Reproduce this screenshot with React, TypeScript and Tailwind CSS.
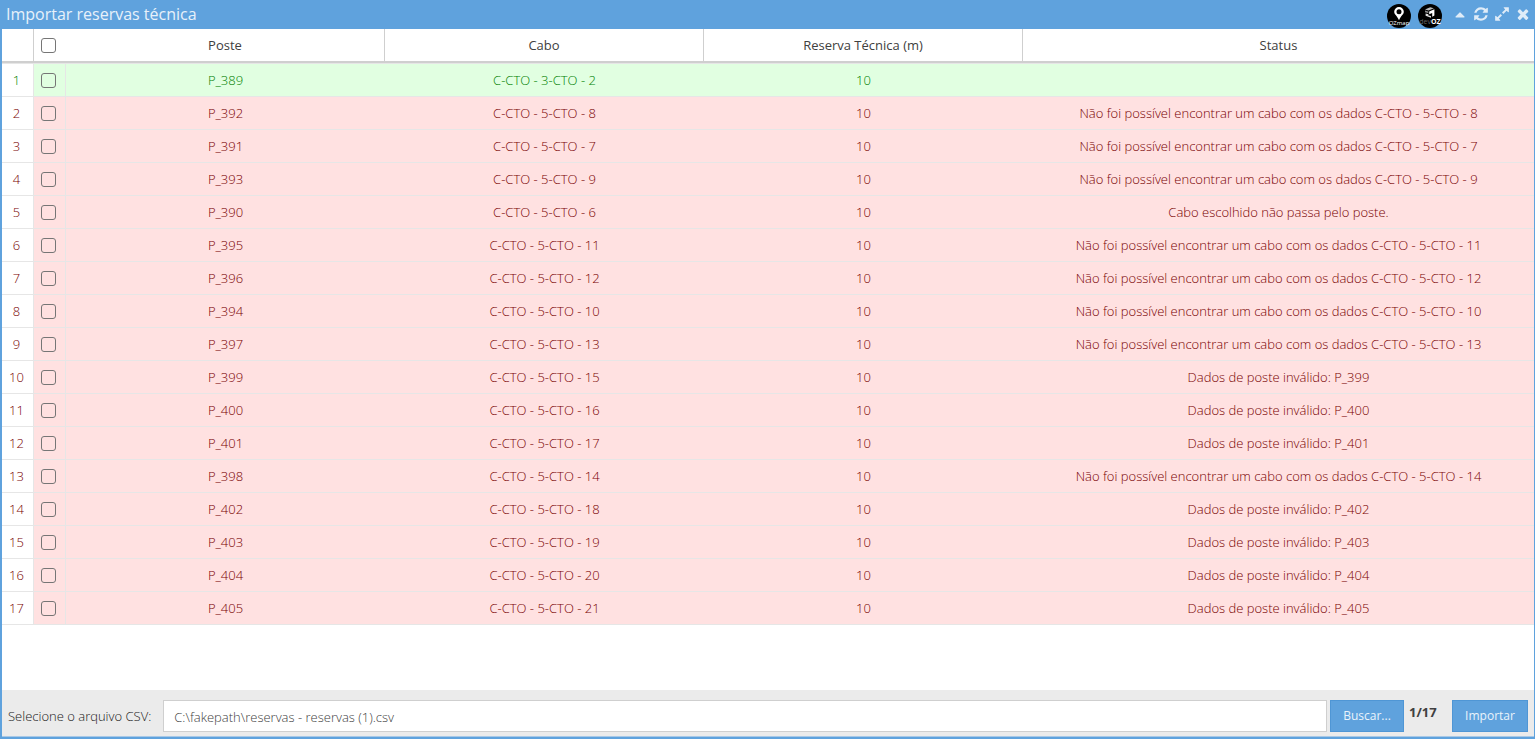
import { useState } from 'react';

interface Reserva {
  poste: string;
  cabo: string;
  metros: number;
  status: string;
}

const semCabo = (cabo: string) => `Não foi possível encontrar um cabo com os dados ${cabo}`;
const posteInvalido = (poste: string) => `Dados de poste inválido: ${poste}`;

const reservas: Reserva[] = [
  { poste: 'P_389', cabo: 'C-CTO - 3-CTO - 2', metros: 10, status: '' },
  { poste: 'P_392', cabo: 'C-CTO - 5-CTO - 8', metros: 10, status: semCabo('C-CTO - 5-CTO - 8') },
  { poste: 'P_391', cabo: 'C-CTO - 5-CTO - 7', metros: 10, status: semCabo('C-CTO - 5-CTO - 7') },
  { poste: 'P_393', cabo: 'C-CTO - 5-CTO - 9', metros: 10, status: semCabo('C-CTO - 5-CTO - 9') },
  { poste: 'P_390', cabo: 'C-CTO - 5-CTO - 6', metros: 10, status: 'Cabo escolhido não passa pelo poste.' },
  { poste: 'P_395', cabo: 'C-CTO - 5-CTO - 11', metros: 10, status: semCabo('C-CTO - 5-CTO - 11') },
  { poste: 'P_396', cabo: 'C-CTO - 5-CTO - 12', metros: 10, status: semCabo('C-CTO - 5-CTO - 12') },
  { poste: 'P_394', cabo: 'C-CTO - 5-CTO - 10', metros: 10, status: semCabo('C-CTO - 5-CTO - 10') },
  { poste: 'P_397', cabo: 'C-CTO - 5-CTO - 13', metros: 10, status: semCabo('C-CTO - 5-CTO - 13') },
  { poste: 'P_399', cabo: 'C-CTO - 5-CTO - 15', metros: 10, status: posteInvalido('P_399') },
  { poste: 'P_400', cabo: 'C-CTO - 5-CTO - 16', metros: 10, status: posteInvalido('P_400') },
  { poste: 'P_401', cabo: 'C-CTO - 5-CTO - 17', metros: 10, status: posteInvalido('P_401') },
  { poste: 'P_398', cabo: 'C-CTO - 5-CTO - 14', metros: 10, status: semCabo('C-CTO - 5-CTO - 14') },
  { poste: 'P_402', cabo: 'C-CTO - 5-CTO - 18', metros: 10, status: posteInvalido('P_402') },
  { poste: 'P_403', cabo: 'C-CTO - 5-CTO - 19', metros: 10, status: posteInvalido('P_403') },
  { poste: 'P_404', cabo: 'C-CTO - 5-CTO - 20', metros: 10, status: posteInvalido('P_404') },
  { poste: 'P_405', cabo: 'C-CTO - 5-CTO - 21', metros: 10, status: posteInvalido('P_405') },
];

const windowTools = [
  {
    label: 'Recolher',
    path: 'M1408 1216q0 26-19 45t-45 19h-896q-26 0-45-19t-19-45 19-45l448-448q19-19 45-19t45 19l448 448q19 19 19 45z',
  },
  {
    label: 'Atualizar',
    path: 'M1639 1056q0 5-1 7-64 268-268 434.5t-478 166.5q-146 0-282.5-55t-243.5-157l-129 129q-19 19-45 19t-45-19-19-45v-448q0-26 19-45t45-19h448q26 0 45 19t19 45-19 45l-137 137q71 66 161 102t187 36q134 0 250-65t186-179q11-17 53-117 8-23 30-23h192q13 0 22.5 9.5t9.5 22.5zm25-800v448q0 26-19 45t-45 19h-448q-26 0-45-19t-19-45 19-45l138-138q-148-137-349-137-134 0-250 65t-186 179q-11 17-53 117-8 23-30 23h-199q-13 0-22.5-9.5t-9.5-22.5v-7q65-268 270-434.5t480-166.5q146 0 284 55.5t245 156.5l130-129q19-19 45-19t45 19 19 45z',
  },
  {
    label: 'Maximizar',
    path: 'M883 1056q0 13-10 23l-332 332 144 144q19 19 19 45t-19 45-45 19h-448q-26 0-45-19t-19-45v-448q0-26 19-45t45-19 45 19l144 144 332-332q10-10 23-10t23 10l114 114q10 10 10 23zm781-864v448q0 26-19 45t-45 19-45-19l-144-144-332 332q-10 10-23 10t-23-10l-114-114q-10-10-10-23t10-23l332-332-144-144q-19-19-19-45t19-45 45-19h448q26 0 45 19t19 45z',
  },
  {
    label: 'Fechar',
    path: 'M1490 1322q0 40-28 68l-136 136q-28 28-68 28t-68-28l-294-294-294 294q-28 28-68 28t-68-28l-136-136q-28-28-28-68t28-68l294-294-294-294q-28-28-28-68t28-68l136-136q28-28 68-28t68 28l294 294 294-294q28-28 68-28t68 28l136 136q28 28 28 68t-28 68l-294 294 294 294q28 28 28 68z',
  },
];

const checkboxClass =
  'block mx-auto size-[15px] appearance-none rounded-[3px] border border-[#767676] bg-transparent checked:bg-[#5fa2dd]';

function OzmapLogo() {
  return (
    <svg viewBox="0 0 24 24" className="size-6" role="img" aria-label="OZmap">
      <circle cx="12" cy="12" r="12" fill="#000" />
      <path
        fill="#fff"
        fillRule="evenodd"
        d="M12 3a4.8 4.8 0 0 0-4.8 4.8c0 2.8 3 4 4.8 8.4 1.8-4.4 4.8-5.6 4.8-8.4A4.8 4.8 0 0 0 12 3zm0 2.2a2.5 2.5 0 1 1 0 5 2.5 2.5 0 0 1 0-5z"
      />
      <text x="12" y="20.8" textAnchor="middle" fontSize="6" fill="#fff" fontFamily="Open Sans, sans-serif">
        OZmap
      </text>
    </svg>
  );
}

function DevozLogo() {
  return (
    <svg viewBox="0 0 24 24" className="size-6" role="img" aria-label="devOZ">
      <circle cx="12" cy="12" r="12" fill="#000" />
      <path fill="#bbb" d="M7 5.4l5.2-2.2 3.6 1-5.2 2.2z" />
      <path fill="#888" d="M7 6.6l3.4 1v1.6L7 8.2z" />
      <path fill="#fff" d="M11.2 7.4l5.2-2.2v6.2l-2.2 1.4V9l-3 1.2z" />
      <path fill="#ddd" d="M7.6 9.4l2.8.8v1.2l2.6.6v1.8l-5.4-2z" />
      <text x="12" y="19.6" textAnchor="middle" fontSize="7" fontFamily="Open Sans, sans-serif">
        <tspan fill="#666">dev</tspan>
        <tspan fill="#fff" fontWeight="700">OZ</tspan>
      </text>
    </svg>
  );
}

function TitleBar() {
  return (
    <header className="flex h-[29px] shrink-0 items-center justify-between bg-[#5fa2dd] pl-1 pr-[3px]">
      <h1 className="pb-0.5 text-base leading-6 text-[#e7f1fa]">Importar reservas técnica</h1>
      <div className="flex items-center">
        <div className="mr-2.5 flex gap-[7px] pt-[3px]">
          <OzmapLogo />
          <DevozLogo />
        </div>
        <div className="flex gap-[5px] pb-px">
          {windowTools.map((tool) => (
            <button key={tool.label} type="button" aria-label={tool.label} className="text-[#dfecf8]">
              <svg viewBox="0 0 1792 1792" className="block size-4" fill="currentColor">
                <path d={tool.path} />
              </svg>
            </button>
          ))}
        </div>
      </div>
    </header>
  );
}

export default function App() {
  const [selected, setSelected] = useState<string[]>([]);
  const allSelected = selected.length === reservas.length;

  const toggleAll = () => {
    setSelected(allSelected ? [] : reservas.map((r) => r.poste));
  };

  const toggleRow = (poste: string) => {
    setSelected((prev) => (prev.includes(poste) ? prev.filter((p) => p !== poste) : [...prev, poste]));
  };

  return (
    <div className="flex min-h-screen flex-col border-b-2 border-l-2 border-r border-[#5fa2dd] bg-white font-['Open_Sans',sans-serif] text-[13px] text-[#404040]">
      <TitleBar />

      <main className="grow">
        <table className="w-full table-fixed border-separate border-spacing-0 text-center">
          <colgroup>
            <col className="w-8" />
            <col className="w-8" />
            <col className="w-[319px]" />
            <col className="w-[319px]" />
            <col className="w-[319px]" />
            <col />
          </colgroup>
          <thead>
            <tr className="h-[34px] *:border-b-2 *:border-[#cfcfcf] *:font-normal">
              <th className="border-r p-0" />
              <th className="p-0 pr-[3px]">
                <input
                  type="checkbox"
                  aria-label="Selecionar todos"
                  checked={allSelected}
                  onChange={toggleAll}
                  className={checkboxClass}
                />
              </th>
              <th className="border-r p-0 pt-0.5">Poste</th>
              <th className="border-r p-0 pt-0.5">Cabo</th>
              <th className="border-r p-0 pt-0.5">Reserva Técnica (m)</th>
              <th className="p-0 pt-0.5">Status</th>
            </tr>
          </thead>
          <tbody>
            {reservas.map((reserva, index) => (
              <tr
                key={reserva.poste}
                className={`h-[33px] font-light *:border-b *:border-[#e6e6e6] first:h-[34px] first:*:border-t ${
                  reserva.status ? 'bg-[#ffe1e1] text-[#780000]' : 'bg-[#e1ffe1] text-[#008000]'
                }`}
              >
                <td className="border-r bg-white p-0 pr-0.5 pt-0.5">{index + 1}</td>
                <td className="border-r p-0 pr-0.5">
                  <input
                    type="checkbox"
                    aria-label={`Selecionar ${reserva.poste}`}
                    checked={selected.includes(reserva.poste)}
                    onChange={() => toggleRow(reserva.poste)}
                    className={checkboxClass}
                  />
                </td>
                <td className="p-0 pt-0.5">{reserva.poste}</td>
                <td className="p-0 pt-0.5">{reserva.cabo}</td>
                <td className="p-0 pt-0.5">{reserva.metros}</td>
                <td className="p-0 pt-0.5">{reserva.status}</td>
              </tr>
            ))}
          </tbody>
        </table>
      </main>

      <footer className="flex h-[47px] shrink-0 items-center border-b border-[#a8c8e6] bg-[#ebebeb] pl-1.5 pr-1.5 pt-[5px]">
        <label htmlFor="arquivo" className="mr-3 pt-0.5 font-light text-[#202020]">
          Selecione o arquivo CSV:
        </label>
        <input
          id="arquivo"
          type="text"
          readOnly
          value="C:\fakepath\reservas - reservas (1).csv"
          className="h-8 min-w-0 grow border border-[#cfcfcf] bg-white px-2.5 pt-0.5 font-light text-[#404040] outline-none"
        />
        <button type="button" className="ml-[3px] h-8 w-[74px] border border-[#4f96d5] bg-[#5fa2dd] text-xs text-[#eaf3fb]">
          Buscar...
        </button>
        <span className="mb-1.5 ml-[5px] w-[43px] font-bold">1/17</span>
        <button type="button" className="h-8 w-[76px] border border-[#4f96d5] bg-[#5fa2dd] text-xs text-[#eaf3fb]">
          Importar
        </button>
      </footer>
    </div>
  );
}
